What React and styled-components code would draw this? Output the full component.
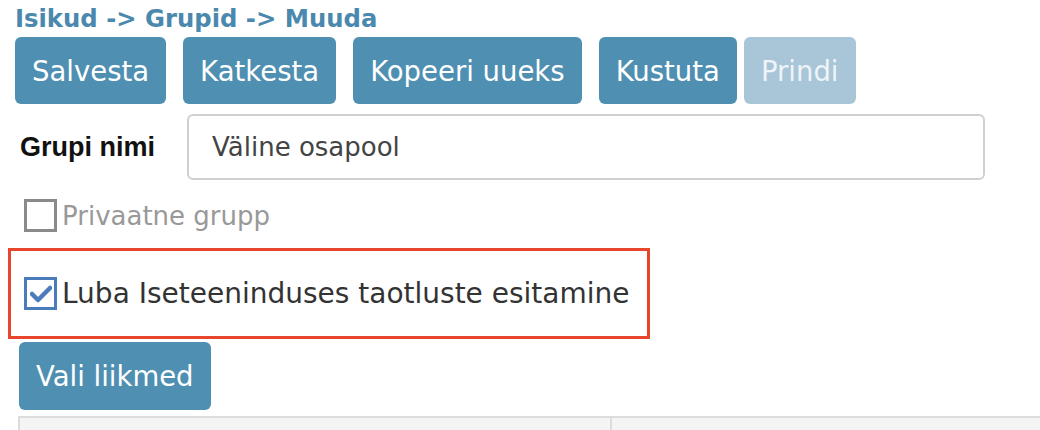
import React from 'react';
import styled, { createGlobalStyle } from 'styled-components';

const GlobalStyle = createGlobalStyle`
  body {
    margin: 0;
    background: #fff;
    font-family: "DejaVu Sans", Verdana, sans-serif;
  }
`

const Page = styled.div`
  width: 1040px;
  height: 430px;
  overflow: hidden;
`

const Crumbs = styled.div`
  margin-left: 15px;
  height: 37px;
  line-height: 38px;
  font-size: 24.3px;
  font-weight: bold;
  color: #4a88ad;
`

const Toolbar = styled.div`
  display: flex;
  margin-left: 15px;
  gap: 17px;
`

const Button = styled.button`
  height: 67px;
  padding: 0 17px;
  border: none;
  border-radius: 6px;
  background: ${p => (p.disabled ? '#a8c6d8' : '#4e8fb2')};
  color: ${p => (p.disabled ? '#eef4f8' : '#fff')};
  font-family: "DejaVu Sans", Verdana, sans-serif;
  font-size: 27.5px;
  margin-left: ${p => (p.tight ? '-10px' : '0')};
`

const FieldRow = styled.div`
  display: flex;
  align-items: center;
  margin: 10px 0 0 20px;
`

const Label = styled.label`
  width: 167px;
  font-family: "Liberation Sans", Arial, sans-serif;
  font-weight: bold;
  font-size: 27px;
  color: #111;
`

const TextInput = styled.input`
  box-sizing: border-box;
  width: 798px;
  height: 66px;
  border: 2px solid #d0d0d0;
  border-radius: 6px;
  padding: 0 23px;
  font-family: "DejaVu Sans", Verdana, sans-serif;
  font-size: 26px;
  color: #444;
  outline: none;
`

const CheckRow = styled.label`
  display: flex;
  align-items: center;
  font-size: ${p => p.size}px;
  color: ${p => (p.disabled ? '#999' : '#333')};
`

const Box = styled.span`
  box-sizing: border-box;
  width: 33px;
  height: 33px;
  margin-right: 5px;
  border: 3px solid ${p => (p.checked ? '#4a7cbb' : '#8a8a8a')};
  background: #fff;
  display: flex;
  align-items: center;
  justify-content: center;
`

const PrivateRow = styled.div`
  margin: 19px 0 0 24px;
`

const Highlight = styled.div`
  box-sizing: border-box;
  width: 642px;
  height: 91px;
  margin: 16px 0 0 8px;
  border: 3px solid #e8462c;
  padding-left: 13px;
  display: flex;
  align-items: center;
`

const MembersButton = styled(Button)`
  margin: 3px 0 0 19px;
  height: 68px;
`

const Table = styled.div`
  margin: 6px 0 0 18px;
  height: 20px;
  border-top: 2px solid #dcdcdc;
  border-left: 2px solid #dcdcdc;
  background: #f4f4f4;
  display: grid;
  grid-template-columns: 592px 1fr;
`

const Cell = styled.div`
  border-right: 2px solid #dcdcdc;
`

const Check = () => (
  <svg width="22" height="18" viewBox="0 0 22 18">
    <path d="M2 9 L8 15 L20 3" fill="none" stroke="#4a7cbb" strokeWidth="4.5" strokeLinecap="round" strokeLinejoin="round" />
  </svg>
);

const App = () => {
  return (
    <Page>
      <GlobalStyle />
      <Crumbs>Isikud -&gt; Grupid -&gt; Muuda</Crumbs>
      <Toolbar>
        <Button>Salvesta</Button>
        <Button>Katkesta</Button>
        <Button>Kopeeri uueks</Button>
        <Button>Kustuta</Button>
        <Button disabled tight>Prindi</Button>
      </Toolbar>
      <FieldRow>
        <Label>Grupi nimi</Label>
        <TextInput defaultValue="Väline osapool" />
      </FieldRow>
      <PrivateRow>
        <CheckRow size={26} disabled>
          <Box />
          Privaatne grupp
        </CheckRow>
      </PrivateRow>
      <Highlight>
        <CheckRow size={28}>
          <Box checked><Check /></Box>
          Luba Iseteeninduses taotluste esitamine
        </CheckRow>
      </Highlight>
      <MembersButton>Vali liikmed</MembersButton>
      <Table>
        <Cell />
        <div />
      </Table>
    </Page>
  );
};

export default App;
